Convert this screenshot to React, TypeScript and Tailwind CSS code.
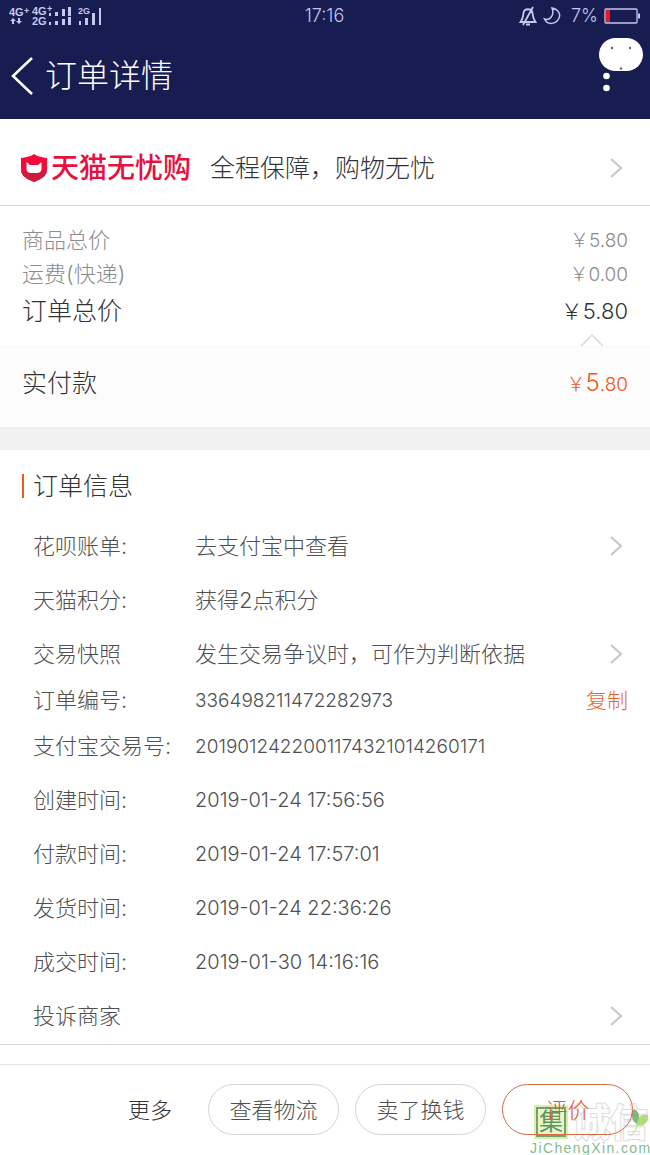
import { FC, ReactNode } from "react";

type InfoRow = {
  label: string;
  value?: string;
  kind?: "id" | "date";
  link?: boolean;
  copy?: boolean;
};

const infoRows: InfoRow[] = [
  { label: "花呗账单:", value: "去支付宝中查看", link: true },
  { label: "天猫积分:", value: "获得2点积分" },
  { label: "交易快照", value: "发生交易争议时，可作为判断依据", link: true },
  { label: "订单编号:", value: "336498211472282973", kind: "id", copy: true },
  { label: "支付宝交易号:", value: "2019012422001174321014260171", kind: "id" },
  { label: "创建时间:", value: "2019-01-24 17:56:56", kind: "date" },
  { label: "付款时间:", value: "2019-01-24 17:57:01", kind: "date" },
  { label: "发货时间:", value: "2019-01-24 22:36:26", kind: "date" },
  { label: "成交时间:", value: "2019-01-30 14:16:16", kind: "date" },
  { label: "投诉商家", link: true },
];

const valueSize = {
  text: "text-[22px] leading-none",
  id: "text-[19px] leading-none",
  date: "text-xl leading-none",
};

const ChevronRight: FC = () => (
  <svg className="h-6 w-4 shrink-0" viewBox="0 0 16 24" fill="none" stroke="#c8c8c8" strokeWidth="2.200">
    <path d="M3 3 L13 12 L3 21" />
  </svg>
);

const SignalIcons: FC = () => (
  <svg className="h-8 w-24" viewBox="0 0 96 32" fill="#c5c8ec" fontFamily="Liberation Sans, sans-serif" fontWeight="bold">
    <text x="0" y="16" fontSize="11">4G</text>
    <text x="15" y="14" fontSize="9">+</text>
    <path d="M4 18 l3 3 h-2 v3 h-2 v-3 h-2z M10 24 l-3 -3 h2 v-3 h2 v3 h2z" />
    <text x="23" y="15" fontSize="11">4G</text>
    <text x="38" y="12" fontSize="9">+</text>
    <text x="23" y="25" fontSize="11">2G</text>
    <path d="M40 13h2v3h-2z M46 12h3v4h-3z M53 9h3v7h-3z M59 7h3v9h-3z" />
    <path d="M40 22h2v3h-2z M46 21h3v4h-3z M53 19h3v6h-3z M59 17h3v8h-3z" />
    <text x="69" y="14" fontSize="9">2G</text>
    <path d="M70 21h2v4h-2z M76 18h3v7h-3z M83 13h3v12h-3z M90 8h2v17h-2z" />
  </svg>
);

const StatusBar: FC = () => (
  <div className="grid h-8 grid-cols-3 items-center pr-[10px] pl-[9px] text-[#c5c8ec]">
    <SignalIcons />
    <span className="text-center text-lg leading-none">17:16</span>
    <div className="flex items-center justify-end gap-[6px]">
      <svg className="h-5 w-[18px]" viewBox="0 0 18 20" fill="none" stroke="currentColor" strokeWidth="1.800">
        <path d="M1.500 16 C4 13 4 11 4.500 7 C5 2 13 2 13.500 7 C14 11 14 13 16.500 16 Z M7 18.500 h4 M14 1 L4 19" />
      </svg>
      <svg className="h-5 w-[18px]" viewBox="0 0 18 20" fill="none" stroke="currentColor" strokeWidth="1.500">
        <path d="M9 2 C15 3 18 8 16 12 C13 19 4 19 1.500 13 C6 15 12 10 9 2 Z" />
      </svg>
      <span className="ml-1 text-lg leading-none">7%</span>
      <svg className="h-4 w-9" viewBox="0 0 36 16" fill="none">
        <rect x="1" y="1" width="32" height="14" rx="1" stroke="currentColor" strokeWidth="1.300" />
        <path d="M2 2h4v12H2z" fill="#e8192c" />
        <path d="M34 5.500h2v5h-2z" fill="currentColor" />
      </svg>
    </div>
  </div>
);

const Header: FC = () => (
  <header className="bg-[#171c51] font-light text-white">
    <StatusBar />
    <div className="flex h-[87px] items-center justify-between pr-[7px] pl-[11px]">
      <div className="flex items-center gap-3">
        <button type="button" aria-label="返回">
          <svg className="h-10 w-[22px]" viewBox="0 0 22 40" fill="none" stroke="white" strokeWidth="2.600">
            <path d="M21 2 L2 20 L21 38" />
          </svg>
        </button>
        <h1 className="text-[32px] leading-none">订单详情</h1>
      </div>
      <button type="button" aria-label="更多操作">
        <svg className="h-[75px] w-11" viewBox="0 0 44 75">
          <rect y="0" width="44" height="33" rx="16.500" fill="white" />
          <g fill="#5d6285">
            <circle cx="13" cy="10" r="1.200" />
            <circle cx="31" cy="10" r="1.200" />
            <circle cx="22" cy="30.500" r="1.200" />
          </g>
          <circle cx="7.500" cy="38" r="3.300" fill="white" />
          <circle cx="7.500" cy="50" r="3.300" fill="white" />
        </svg>
      </button>
    </div>
  </header>
);

const Guarantee: FC = () => (
  <a href="#guarantee" className="flex h-[87px] items-center border-b border-[#d6d6d6] pt-3 pr-[26px] pl-[21px]">
    <svg className="h-7 w-[26px] shrink-0" viewBox="0 0 26 28">
      <path d="M13 0 C17 3 21 3 26 4 V15 C26 22 20 25 13 28 C6 25 0 22 0 15 V4 C5 3 9 3 13 0 Z" fill="#f50b3b" />
      <path d="M0 17 C1 23 7 25.500 13 28 C19 25.500 25 23 26 17 Z" fill="#ce1c40" />
      <path d="M5.500 8 L9 11 H17 L20.500 8 V15 C20.500 18 18 19 15.500 19 H10.500 C8 19 5.500 18 5.500 15 Z" fill="white" />
    </svg>
    <span className="ml-1 text-[28px] leading-none font-medium text-[#e90f3e]">天猫无忧购</span>
    <span className="ml-[19px] grow text-[25px] leading-none text-[#333]">全程保障，购物无忧</span>
    <ChevronRight />
  </a>
);

const PriceRow: FC<{ label: string; children: ReactNode }> = ({ label, children }) => (
  <div className="flex h-[34px] items-center justify-between">
    <dt className="text-[22px] leading-none">{label}</dt>
    <dd className="text-[19px] leading-none">{children}</dd>
  </div>
);

const Prices: FC = () => (
  <section className="text-[#333]">
    <dl className="pt-[17px] pr-[22px] pl-[22px] text-[#8c8c8c]">
      <PriceRow label="商品总价">￥5.80</PriceRow>
      <PriceRow label="运费(快递)">￥0.00</PriceRow>
      <div className="flex h-10 items-center justify-between text-[#333]">
        <dt className="text-[25px] leading-none">订单总价</dt>
        <dd className="text-[22px] leading-none">￥5.80</dd>
      </div>
    </dl>
    <div className="flex h-4 items-end justify-end border-b border-[#f7f7f7] pr-[46px]">
      <svg className="h-3 w-6" viewBox="0 0 24 12" fill="none" stroke="#dcdcdc" strokeWidth="1.500">
        <path d="M1 12 L12 1 L23 12" />
      </svg>
    </div>
    <div className="flex h-20 items-center justify-between bg-[#fcfcfc] px-[22px] pb-2">
      <span className="text-[25px] leading-none">实付款</span>
      <span className="text-[19px] leading-none text-[#f0591b]">
        ￥<span className="text-2xl leading-none">5</span>.80
      </span>
    </div>
  </section>
);

const OrderInfo: FC = () => (
  <section className="border-b border-[#d6d6d6] pt-6 pr-[22px] pb-px pl-[22px]">
    <h2 className="mb-[21px] flex h-6 items-center border-l-2 border-[#f0591b] pl-[9px] text-[25px] leading-none text-[#333]">
      订单信息
    </h2>
    <dl className="pl-[11px] text-[#505050]">
      {infoRows.map((row) => (
        <div key={row.label} className={`flex items-center ${row.copy ? "h-[38px]" : "h-[54px]"}`}>
          <dt className="w-[162px] shrink-0 text-[22px] leading-none whitespace-nowrap">{row.label}</dt>
          <dd className="flex grow items-center justify-between">
            <span className={valueSize[row.kind ?? "text"]}>{row.value}</span>
            {row.link && (
              <a href="#detail" aria-label={row.label} className="mr-1">
                <ChevronRight />
              </a>
            )}
            {row.copy && (
              <button type="button" className="text-[21px] leading-none text-[#e8662c]">
                复制
              </button>
            )}
          </dd>
        </div>
      ))}
    </dl>
  </section>
);

const Watermark: FC = () => (
  <div className="pointer-events-none absolute right-0 bottom-0 w-[120px] leading-none">
    <div className="flex items-center gap-[6px] pl-[6px]">
      <span className="flex size-[30px] items-center justify-center border-2 border-[#6fa374] bg-[#e8f6c8] text-2xl leading-none font-normal text-[#5c9662] outline-2 outline-[#d9f0a8]">
        集
      </span>
      <span className="text-[38px] leading-none font-bold text-white [-webkit-text-stroke:2px_#dcdcdc] [paint-order:stroke_fill]">
        诚信
      </span>
    </div>
    <p className="font-[Liberation_Sans] text-sm leading-none font-normal tracking-widest text-[#82bd8a]">
      JiChengXin.com
    </p>
    <svg className="absolute top-1 right-0 h-8 w-5" viewBox="0 0 20 32">
      <path d="M4 2 C-1 6 2 14 7 17 C11 11 9 4 4 2 Z" fill="#6fa86a" opacity=".85" />
      <path d="M18 8 C10 7 6 12 7 18 C14 20 20 14 18 8 Z" fill="#a4d765" opacity=".85" />
      <path d="M7 17 C7 22 4 26 0 29" fill="none" stroke="#b9dc8c" />
    </svg>
  </div>
);

// The watermark comes first so that the rate button stays readable above it.
const Footer: FC = () => (
  <footer className="relative mt-[19px] border-t border-[#e2e2e2] text-[22px] leading-none text-[#505050]">
    <Watermark />
    <div className="relative flex items-center justify-end gap-4 px-[17px] pt-[19px] pb-5">
      <button type="button" className="mr-5 text-[#333]">更多</button>
      <button type="button" className="h-[51px] w-[131px] rounded-full border border-[#d4d4d4]">查看物流</button>
      <button type="button" className="h-[51px] w-[131px] rounded-full border border-[#d4d4d4]">卖了换钱</button>
      <button type="button" className="h-[51px] w-[131px] rounded-full border border-[#d86a43] text-[#e0562a]">评价</button>
    </div>
  </footer>
);

export default function App() {
  return (
    <div className="bg-white font-['Inter','Noto_Sans_CJK_SC',sans-serif] font-light">
      <Header />
      <main>
        <Guarantee />
        <Prices />
        <div className="h-[23px] bg-[#f0f0f0]" />
        <OrderInfo />
      </main>
      <Footer />
    </div>
  );
}
